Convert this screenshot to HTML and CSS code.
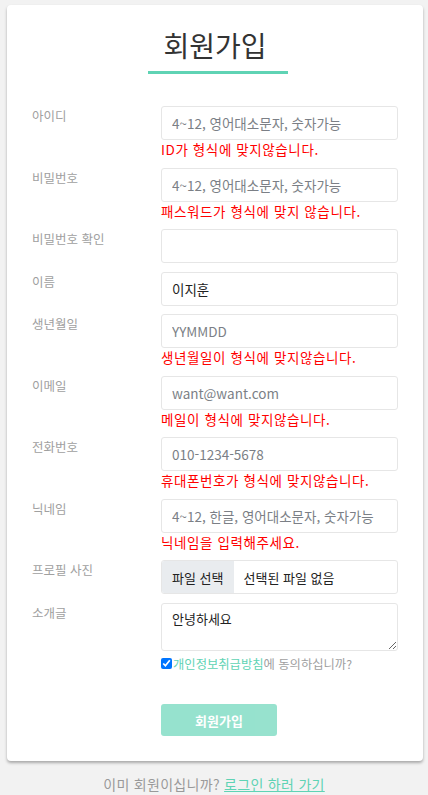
FILE: index.html
```html
<!DOCTYPE html>
<html lang="ko">
<head>
    <meta charset="UTF-8">
    <meta name="viewport" content="width=device-width, initial-scale=1.0">
    <title>회원가입</title>
    <link rel="stylesheet" href="styles.css">
</head>
<body>
    <div class="card">
        <div class="title">
            <h1>회원가입</h1>
            <div class="title-line"></div>
        </div>

        <form class="join-form">
            <div class="form-row">
                <label for="user-id">아이디</label>
                <div class="field">
                    <input type="text" id="user-id" placeholder="4~12, 영어대소문자, 숫자가능">
                    <p class="error">ID가 형식에 맞지않습니다.</p>
                </div>
            </div>
            <div class="form-row">
                <label for="user-pw">비밀번호</label>
                <div class="field">
                    <input type="password" id="user-pw" placeholder="4~12, 영어대소문자, 숫자가능">
                    <p class="error">패스워드가 형식에 맞지 않습니다.</p>
                </div>
            </div>
            <div class="form-row">
                <label for="user-pw2">비밀번호 확인</label>
                <div class="field">
                    <input type="password" id="user-pw2">
                </div>
            </div>
            <div class="form-row">
                <label for="user-name">이름</label>
                <div class="field">
                    <input type="text" id="user-name" value="이지훈">
                </div>
            </div>
            <div class="form-row">
                <label for="user-birth">생년월일</label>
                <div class="field">
                    <input type="text" id="user-birth" placeholder="YYMMDD">
                    <p class="error">생년월일이 형식에 맞지않습니다.</p>
                </div>
            </div>
            <div class="form-row">
                <label for="user-email">이메일</label>
                <div class="field">
                    <input type="text" id="user-email" placeholder="want@want.com">
                    <p class="error">메일이 형식에 맞지않습니다.</p>
                </div>
            </div>
            <div class="form-row">
                <label for="user-phone">전화번호</label>
                <div class="field">
                    <input type="text" id="user-phone" placeholder="010-1234-5678">
                    <p class="error">휴대폰번호가 형식에 맞지않습니다.</p>
                </div>
            </div>
            <div class="form-row">
                <label for="user-nick">닉네임</label>
                <div class="field">
                    <input type="text" id="user-nick" placeholder="4~12, 한글, 영어대소문자, 숫자가능">
                    <p class="error">닉네임을 입력해주세요.</p>
                </div>
            </div>
            <div class="form-row">
                <label>프로필 사진</label>
                <div class="field">
                    <div class="file-box">
                        <span class="file-btn">파일 선택</span>
                        <span class="file-name">선택된 파일 없음</span>
                    </div>
                </div>
            </div>
            <div class="form-row">
                <label for="user-intro">소개글</label>
                <div class="field">
                    <textarea id="user-intro">안녕하세요</textarea>
                    <div class="agree">
                        <input type="checkbox" id="agree" checked>
                        <label for="agree"><a href="#">개인정보취급방침</a>에 동의하십니까?</label>
                    </div>
                </div>
            </div>
            <div class="form-row last">
                <span></span>
                <div class="field">
                    <button type="submit" class="btn" disabled>회원가입</button>
                </div>
            </div>
        </form>
    </div>

    <p class="footer">이미 회원이십니까? <a href="#">로그인 하러 가기</a></p>
</body>
</html>
```

FILE: styles.css
```css
* {
    margin: 0;
    padding: 0;
    box-sizing: border-box;
    font-family: 'Noto Sans CJK KR', 'Noto Sans', sans-serif;
}

body {
    background: #f2f2f2;
    padding-top: 5px;
}

.card {
    background: #fff;
    margin: 0 5px 0 7px;
    border-radius: 4px;
    box-shadow: 0 2px 3px rgba(0, 0, 0, 0.3);
    padding: 20px 25px 25px 25px;
}

.title {
    display: flex;
    flex-direction: column;
    align-items: center;
}

.title h1 {
    font-size: 28px;
    font-weight: 400;
    line-height: 40px;
    color: #333;
}

.title-line {
    width: 140px;
    height: 3px;
    margin-top: 6px;
    margin-left: 6px;
    background: #5fd3b4;
}

.join-form {
    margin-top: 32px;
}

.form-row {
    display: grid;
    grid-template-columns: 129px 1fr;
    margin-bottom: 8.5px;
}

.form-row.last {
    margin-bottom: 0;
}

.form-row > label {
    font-size: 12.5px;
    line-height: 20px;
    color: #a0a0a0;
}

.field input[type="text"],
.field input[type="password"] {
    width: 100%;
    height: 34px;
    padding: 0 10px;
    border: 1px solid #e6e6e6;
    border-radius: 3px;
    font-size: 13.5px;
    color: #222;
    background: #fff;
}

.field input::placeholder {
    color: #7b7f86;
}

.field input:focus,
.field textarea:focus {
    outline: none;
    border-color: #5fd3b4;
}

.error {
    font-size: 13.5px;
    line-height: 19px;
    letter-spacing: 0.6px;
    color: #ff0000;
}

.file-box {
    display: flex;
    height: 34px;
    border: 1px solid #e6e6e6;
    border-radius: 3px;
    overflow: hidden;
    font-size: 13px;
    color: #222;
}

.file-btn {
    display: flex;
    align-items: center;
    padding: 0 11px 0 10px;
    background: #e9ecef;
}

.file-name {
    display: flex;
    align-items: center;
    padding: 0 9px;
}

.field textarea {
    display: block;
    width: 100%;
    height: 48px;
    padding: 5px 10px;
    border: 1px solid #e6e6e6;
    border-radius: 3px;
    font-size: 13px;
    line-height: 20px;
    color: #222;
    resize: vertical;
}

.agree {
    display: flex;
    align-items: center;
    margin-top: 3px;
    font-size: 12.3px;
    line-height: 20px;
    color: #a0a0a0;
}

.agree input {
    width: 11px;
    height: 11px;
    margin-right: 1px;
}

.agree a {
    color: #5fd3b4;
    text-decoration: none;
}

.btn {
    width: 116px;
    height: 32px;
    margin-top: 22px;
    border: none;
    border-radius: 3px;
    background: #5fd3b4;
    opacity: 0.65;
    color: #fff;
    font-size: 13px;
    font-weight: 700;
}

.footer {
    margin-top: 13px;
    text-align: center;
    font-size: 14px;
    line-height: 20px;
    letter-spacing: 0.3px;
    color: #999;
}

.footer a {
    color: #5fd3b4;
}
```
